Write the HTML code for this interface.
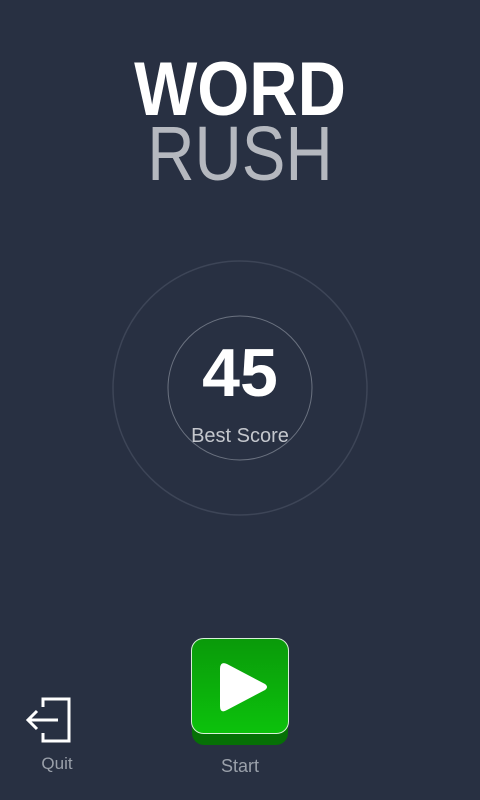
<!DOCTYPE html>
<html><head><style>
body{margin:0;width:480px;height:800px;background:#283042;overflow:hidden;position:relative;font-family:"Liberation Sans",sans-serif}
.t{position:absolute;left:0;width:480px;text-align:center;white-space:nowrap}
</style></head><body>
<div class="t" style="top:51px;font-size:76px;font-weight:bold;color:#fff;line-height:77px;transform:scaleX(.88)">WORD</div>
<div class="t" style="top:114px;font-size:77px;color:#b5b8bf;line-height:80px;transform:scaleX(.85)">RUSH</div>
<svg style="position:absolute;left:0;top:0" width="480" height="800">
<circle cx="240" cy="388" r="127" fill="none" stroke="#3d4557" stroke-width="1.5"/>
<circle cx="240" cy="388" r="72" fill="none" stroke="#6b7280" stroke-width="1"/>
<g stroke="#fff" stroke-width="3" fill="none">
<path d="M43 707V699H69V741H43V733"/>
<path d="M58 720H28M37 711L28 720L37 729"/>
</g>
<defs><linearGradient id="g" x1="0" y1="0" x2="0" y2="1"><stop offset="0" stop-color="#0a9a0a"/><stop offset="1" stop-color="#0cc20c"/></linearGradient></defs>
<rect x="192" y="648" width="96" height="97" rx="12" fill="#067006"/>
<rect x="191.5" y="638.5" width="97" height="95" rx="12" fill="url(#g)" stroke="#d8f0d8" stroke-width="1"/>
<path d="M227 664Q220 661 220 669V706Q220 714 227 710L265 690Q269 687 265 684Z" fill="#fff"/>
</svg>
<div class="t" style="top:339px;font-size:68px;font-weight:bold;color:#fff;line-height:68px">45</div>
<div class="t" style="top:425px;font-size:20px;color:#c4c7cd">Best Score</div>
<div style="position:absolute;left:20px;width:74px;top:754px;font-size:17px;color:#9aa0aa;text-align:center">Quit</div>
<div class="t" style="top:756px;font-size:18px;color:#9aa0aa">Start</div>
</body></html>
